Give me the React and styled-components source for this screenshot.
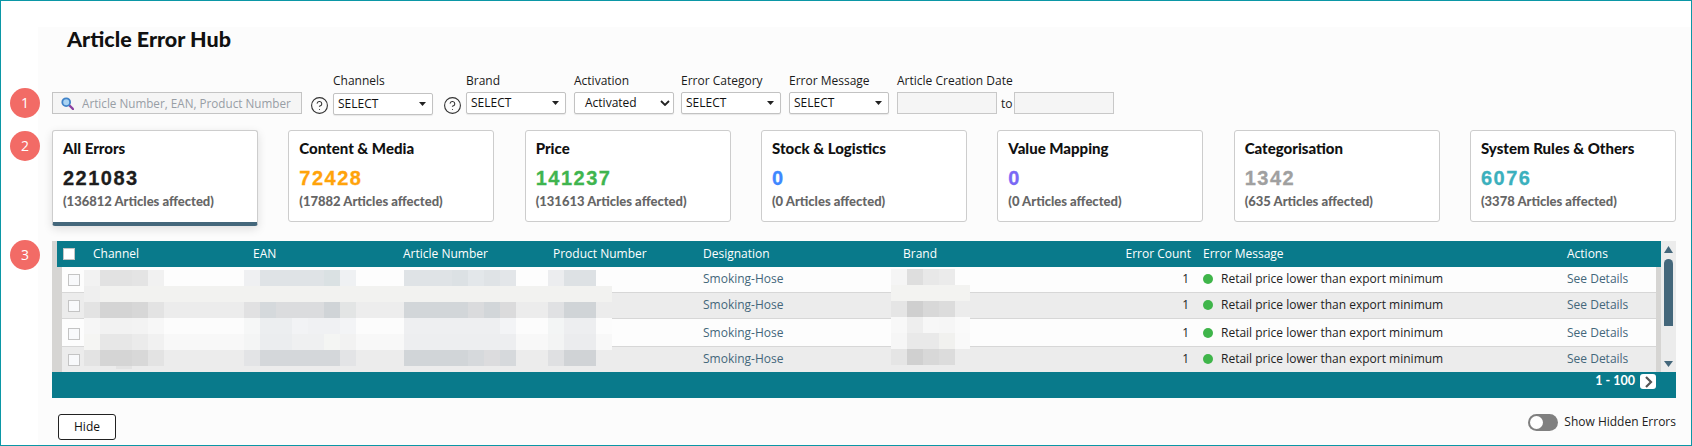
import React from "react";
import styled, { createGlobalStyle } from "styled-components";
import { CircleHelp } from "lucide-react";

const CARDS = [
  { title: "All Errors", count: "221083", affected: "136812", color: "#1d1d1d", active: true },
  { title: "Content & Media", count: "72428", affected: "17882", color: "#ffa30a" },
  { title: "Price", count: "141237", affected: "131613", color: "#3fb54f" },
  { title: "Stock & Logistics", count: "0", affected: "0", color: "#3f88ff" },
  { title: "Value Mapping", count: "0", affected: "0", color: "#7a68f5" },
  { title: "Categorisation", count: "1342", affected: "635", color: "#a0a0a0" },
  { title: "System Rules & Others", count: "6076", affected: "3378", color: "#3bb0bd" },
];

const ROWS = [
  { height: 25 },
  { height: 25, shaded: true },
  { height: 27, shaded: false, lower: true },
  { height: 25, shaded: true, last: true },
];

const COLUMNS = ["Channel", "EAN", "Article Number", "Product Number", "Designation", "Brand"];

// redacted cells: [first cell, cell count, colour] per line of the mosaic
const MOSAIC = [
  [[0, 1, "#f2f2f2"], [1, 2, "#e2e2e2"], [3, 1, "#e4e4e4"], [4, 1, "#f1f1f1"], [10, 1, "#eff0f2"], [11, 4, "#dfe3e6"], [15, 1, "#dae1e3"], [16, 1, "#eff1f3"], [20, 3, "#dfe3e6"], [23, 1, "#dce1e4"], [24, 1, "#e3e7ea"], [25, 1, "#dfe3e6"], [26, 1, "#e3e6e9"], [29, 1, "#ecedef"], [30, 2, "#dde1e4"]],
  [[0, 1, "#efefef"], [1, 32, "#f2f2f0"]],
  [[0, 1, "#e3e3e3"], [1, 2, "#d4d4d4"], [3, 1, "#d7d7d7"], [4, 1, "#e3e3e3"], [5, 5, "#ececec"], [10, 1, "#e1e1e2"], [11, 1, "#d5d9dc"], [12, 3, "#dbdcde"], [15, 1, "#d0d4d7"], [16, 1, "#e3e5e5"], [17, 3, "#ededed"], [20, 4, "#d2d6d9"], [24, 1, "#dadbdd"], [25, 1, "#d2d6d9"], [26, 1, "#dbdbdc"], [27, 2, "#ececec"], [29, 1, "#e0e1e3"], [30, 2, "#d0d4d7"], [32, 1, "#ececec"]],
  [[0, 1, "#f6f6f6"], [1, 2, "#f2f2f2"], [3, 1, "#f3f3f3"], [4, 1, "#f7f7f7"], [5, 5, "#fcfcfc"], [10, 1, "#f6f7f7"], [11, 2, "#eceef0"], [13, 1, "#f2f3f5"], [14, 2, "#f0f1f3"], [16, 1, "#f3f4f6"], [17, 3, "#fcfcfc"], [20, 6, "#eeeff1"], [26, 1, "#f3f4f6"], [27, 2, "#fcfcfc"], [29, 1, "#f3f5f5"], [30, 2, "#edeef0"], [32, 1, "#fcfcfc"]],
  [[0, 1, "#f5f5f3"], [1, 2, "#e7e7e7"], [3, 1, "#ebebeb"], [4, 1, "#f1f1f1"], [5, 5, "#f8f8f8"], [10, 1, "#f4f5f5"], [11, 2, "#ebedef"], [13, 2, "#eff0f1"], [15, 1, "#f4f5f3"], [16, 1, "#f2f2f2"], [17, 3, "#f8f8f8"], [20, 7, "#edeef0"], [27, 2, "#f8f8f8"], [29, 1, "#f3f4f4"], [30, 2, "#ebecee"], [32, 1, "#f8f8f8"]],
  [[0, 1, "#e3e3e3"], [1, 2, "#d5d5d5"], [3, 1, "#d8d8d8"], [4, 1, "#e3e3e3"], [10, 1, "#e3e4e6"], [11, 5, "#d4d7da"], [16, 1, "#e3e4e6"], [20, 4, "#d1d5d8"], [24, 1, "#d6d9dc"], [25, 1, "#dcdcde"], [26, 1, "#d6d9dc"], [29, 1, "#dfe0e2"], [30, 2, "#d0d3d6"]],
];

const BRAND_MOSAIC = [
  ["#f5f5f5", "#dedede", "#e8e8e8", "#ebebeb"],
  ["#f3f3f1", "#f3f3f1", "#f3f3f1", "#f3f3f1", "#f3f3f1"],
  ["#e5e5e5", "#cfcfcf", "#d8d8d8", "#dcdcdc", "#ececec"],
  ["#f8f8f8", "#eeeeee", "#f7f7f7", "#f6f6f6", "#fafafa"],
  ["#f6f6f6", "#e9e9e9", "#e9e9e9", "#f1f1ef", "#f9f9f9"],
  ["#e5e5e5", "#d0d0d0", "#d8d8d8", "#dcdcdc"],
];

const Mosaic = () => (
  <MosaicLayer width="1609" height="131" shapeRendering="crispEdges">
    {MOSAIC.map((line, row) =>
      line.map(([first, count, color]) => (
        <rect key={`${row}-${first}`} x={32 + first * 16} y={29 + row * 16} width={count * 16} height="16" fill={color} />
      ))
    )}
    <rect x="64" y="125" width="16" height="3" fill="#e3e3e3" />
    {BRAND_MOSAIC.map((line, row) =>
      line.map((color, i) => (
        <rect key={`b${row}-${i}`} x={839 + i * 16} y={28 + row * 16} width={i === 4 ? 15 : 16} height="16" fill={color} />
      ))
    )}
  </MosaicLayer>
);

const SearchIcon = () => (
  <svg width="13" height="13" viewBox="0 0 13 13">
    <line x1="8" y1="8" x2="12" y2="12" stroke="#8a3fa0" strokeWidth="2.4" strokeLinecap="round" />
    <circle cx="5.2" cy="5.2" r="3.9" fill="#a9d3f2" stroke="#3f82c8" strokeWidth="1.8" />
  </svg>
);

const Caret = () => (
  <svg width="7" height="4" viewBox="0 0 7 4">
    <path d="M0 0h7L3.5 4z" fill="#222" />
  </svg>
);

const Chevron = () => (
  <svg width="10" height="6" viewBox="0 0 10 6">
    <path d="M1 1l4 4 4-4" fill="none" stroke="#222" strokeWidth="1.8" />
  </svg>
);

const Dropdown = ({ label, lower, gap }) => (
  <Field $gap={gap}>
    <FieldLabel>{label}</FieldLabel>
    <SelectBox $lower={lower}>
      <span>SELECT</span>
      <Caret />
    </SelectBox>
  </Field>
);

const App = () => {
  return (
    <Frame>
      <GlobalStyle />
      <Panel>
        <Title>Article Error Hub</Title>

        <Filters>
          <Badge $top={15}>1</Badge>
          <SearchBox>
            <SearchIcon />
            <SearchInput placeholder="Article Number, EAN, Product Number" />
          </SearchBox>
          <Help>
            <CircleHelp size={19} strokeWidth={1.4} color="#333" />
          </Help>
          <Dropdown label="Channels" lower />
          <Help $wide>
            <CircleHelp size={19} strokeWidth={1.4} color="#333" />
          </Help>
          <Dropdown label="Brand" />
          <Field $gap={8}>
            <FieldLabel>Activation</FieldLabel>
            <SelectBox $native>
              <span>Activated</span>
              <Chevron />
            </SelectBox>
          </Field>
          <Dropdown label="Error Category" gap={7} />
          <Dropdown label="Error Message" gap={8} />
          <Field $gap={8}>
            <FieldLabel>Article Creation Date</FieldLabel>
            <DateRange>
              <DateBox />
              <DateTo>to</DateTo>
              <DateBox />
            </DateRange>
          </Field>
        </Filters>

        <CardRow>
          <Badge $top={1}>2</Badge>
          {CARDS.map((card) => (
            <Card key={card.title} $active={card.active}>
              <CardTitle>{card.title}</CardTitle>
              <CardCount $color={card.color}>{card.count}</CardCount>
              <CardNote>({card.affected} Articles affected)</CardNote>
            </Card>
          ))}
        </CardRow>

        <Table>
          <Badge $top={-1}>3</Badge>
          <TableTop>
            <TableMain>
              <HeaderRow>
                <CheckCell>
                  <Check $header />
                </CheckCell>
                {COLUMNS.map((column) => (
                  <span key={column}>{column}</span>
                ))}
                <CountCell>Error Count</CountCell>
                <span>Error Message</span>
                <span>Actions</span>
              </HeaderRow>
              {ROWS.map((row, i) => (
                <BodyRow key={i} $height={row.height} $shaded={row.shaded} $lower={row.lower} $last={row.last}>
                  <CheckCell>
                    <Check />
                  </CheckCell>
                  <span />
                  <span />
                  <span />
                  <span />
                  <RowLink>Smoking-Hose</RowLink>
                  <span />
                  <RowCount>1</RowCount>
                  <ErrorText>
                    <Dot />
                    Retail price lower than export minimum
                  </ErrorText>
                  <RowLink>See Details</RowLink>
                </BodyRow>
              ))}
              <Mosaic />
            </TableMain>
            <ScrollBar>
              <svg width="9" height="7" viewBox="0 0 9 7">
                <path d="M4.5 0L9 7H0z" fill="#44677b" />
              </svg>
              <ScrollThumb />
              <svg width="9" height="6" viewBox="0 0 9 6">
                <path d="M0 0h9L4.5 6z" fill="#44677b" />
              </svg>
            </ScrollBar>
          </TableTop>
          <Pager>
            1 - 100
            <PagerButton>
              <svg width="9" height="12" viewBox="0 0 9 12">
                <path d="M2 1l5 5-5 5" fill="none" stroke="#555" strokeWidth="2.2" />
              </svg>
            </PagerButton>
          </Pager>
        </Table>

        <BottomBar>
          <HideButton>Hide</HideButton>
          <ToggleGroup>
            <Toggle />
            <ToggleLabel>Show Hidden Errors</ToggleLabel>
          </ToggleGroup>
        </BottomBar>
      </Panel>
    </Frame>
  );
};

export default App;

const UI_FONT = `"Open Sans", "Liberation Sans", sans-serif`;
const HEAD_FONT = `Lato, "Liberation Sans", sans-serif`;
const TEAL = "#097a8b";
const SLATE = "#44677b";

const GlobalStyle = createGlobalStyle`
  body {
    margin: 0;
    background: #fff;
    font-family: ${UI_FONT};
  }
`;

const Frame = styled.div`
  box-sizing: border-box;
  width: 1692px;
  height: 446px;
  border: 1px solid #0b97a6;
  padding: 8px 0 0 37px;
  overflow: hidden;
`;

const Panel = styled.div`
  height: 100%;
  padding: 0 15px 0 14px;
  background: #fcfcfc;
`;

const Title = styled.h1`
  margin: 18px 0 0 15px;
  font: 900 21.5px/24px ${HEAD_FONT};
  color: #111;
`;

const Badge = styled.div`
  position: absolute;
  left: -42px;
  top: ${(p) => p.$top}px;
  width: 30px;
  height: 30px;
  border-radius: 50%;
  background: #f26b66;
  color: #fff;
  font-size: 14px;
  line-height: 30px;
  text-align: center;
`;

const Filters = styled.div`
  position: relative;
  display: flex;
  align-items: flex-start;
  margin-top: 22px;
`;

const SearchBox = styled.label`
  box-sizing: border-box;
  display: flex;
  align-items: center;
  gap: 8px;
  width: 250px;
  height: 22px;
  margin-top: 19px;
  padding-left: 8px;
  background: #f5f5f5;
  border: 1px solid #c4c4c4;
`;

const SearchInput = styled.input`
  flex: 1;
  min-width: 0;
  padding: 0;
  border: 0;
  outline: 0;
  background: transparent;
  font: 11.7px/20px ${UI_FONT};

  &::placeholder {
    color: #989ea5;
    opacity: 1;
  }
`;

const Help = styled.div`
  display: flex;
  justify-content: center;
  width: 16px;
  margin: 23px 6px 0 ${(p) => (p.$wide ? 11 : 9)}px;

  svg {
    flex: none;
  }
`;

const Field = styled.div`
  display: flex;
  flex-direction: column;
  margin-left: ${(p) => p.$gap || 0}px;
`;

const FieldLabel = styled.label`
  height: 16px;
  margin-bottom: 3px;
  font-size: 12px;
  line-height: 16px;
  color: #1a1a1a;
  white-space: nowrap;
`;

const SelectBox = styled.div`
  box-sizing: border-box;
  display: flex;
  align-items: center;
  justify-content: space-between;
  width: 100px;
  height: 22px;
  margin-top: ${(p) => (p.$lower ? 1 : 0)}px;
  padding: 0 ${(p) => (p.$native ? 3 : 6)}px 0 ${(p) => (p.$native ? 10 : 4)}px;
  background: #fff;
  border: 1px solid #c2c2c2;
  border-radius: 2px;
  box-shadow: 0 1px 1px rgba(0, 0, 0, 0.08);
  font-size: 12px;
  color: #111;

  span {
    padding-bottom: 2px;
  }
`;

const DateRange = styled.div`
  display: flex;
  align-items: center;
  font-size: 12px;
  color: #222;
`;

const DateTo = styled.span`
  width: 17px;
  padding-left: 4px;
  box-sizing: border-box;
`;

const DateBox = styled.div`
  box-sizing: border-box;
  width: 100px;
  height: 22px;
  background: #f5f5f5;
  border: 1px solid #c8c8c8;
`;

const CardRow = styled.div`
  position: relative;
  display: flex;
  justify-content: space-between;
  align-items: flex-start;
  margin-top: 15px;
`;

const Card = styled.div`
  box-sizing: border-box;
  width: 206px;
  height: ${(p) => (p.$active ? 96 : 92)}px;
  padding: 7px 10px 0;
  background: #fff;
  border: 1px solid #cdcdcd;
  border-bottom: ${(p) => (p.$active ? `4px solid ${SLATE}` : "1px solid #cdcdcd")};
  border-radius: 3px;
  box-shadow: ${(p) => (p.$active ? "0 3px 10px rgba(0, 0, 0, 0.12)" : "none")};
`;

const CardTitle = styled.div`
  font: 900 15px/20px ${HEAD_FONT};
  color: #111;
  white-space: nowrap;
`;

const CardCount = styled.div`
  margin-top: 7px;
  font: 700 20px/26px "Liberation Sans", sans-serif;
  letter-spacing: 1.5px;
  -webkit-text-stroke: 0.3px ${(p) => p.$color};
  color: ${(p) => p.$color};
`;

const CardNote = styled.div`
  margin-top: 2px;
  font: 900 13px/16px ${HEAD_FONT};
  color: #666;
  white-space: nowrap;
`;

const Table = styled.div`
  position: relative;
  margin-top: 15px;
`;

const TableTop = styled.div`
  display: flex;
`;

const TableMain = styled.div`
  position: relative;
  flex: 1;
  background: #d6d5d3;
`;

const MosaicLayer = styled.svg`
  position: absolute;
  left: 0;
  top: 0;
  pointer-events: none;
`;

const columns = (first) => `${first}px 160px 150px 150px 150px 200px 150px 150px 364px 1fr`;

const HeaderRow = styled.div`
  display: grid;
  grid-template-columns: ${columns(36)};
  align-items: center;
  height: 26px;
  margin-left: 5px;
  background: ${TEAL};
  color: #fff;
  font-size: 12px;
  white-space: nowrap;

  & > span {
    padding-bottom: 2px;
  }
`;

const BodyRow = styled.div`
  display: grid;
  grid-template-columns: ${columns(31)};
  align-items: center;
  height: ${(p) => p.$height - (p.$lower ? 2 : 0)}px;
  margin: 0 5px 0 10px;
  padding-top: ${(p) => (p.$lower ? 2 : 0)}px;
  background: ${(p) => (p.$shaded ? "#ececec" : "#fdfdfd")};
  border-bottom: ${(p) => (p.$last ? "none" : "1px solid #d7d7d7")};
  font-size: 12px;
  color: #222;
  white-space: nowrap;

  & > span {
    padding-bottom: 2px;
  }
`;

const CheckCell = styled.div`
  display: flex;
  padding-left: 6px;
`;

const Check = styled.div`
  box-sizing: border-box;
  width: 12px;
  height: 12px;
  background: ${(p) => (p.$header ? "#fff" : "#f8f9fb")};
  border: 1px solid #c4c4c4;
`;

const CountCell = styled.span`
  padding-right: 12px;
  text-align: right;
`;

const RowCount = styled.span`
  padding-right: 14px;
  text-align: right;
`;

const RowLink = styled.span`
  color: ${SLATE};
  font-weight: 500;
`;

const ErrorText = styled.span`
  display: flex;
  align-items: center;
  gap: 8px;
`;

const Dot = styled.span`
  flex: none;
  width: 10px;
  height: 10px;
  border-radius: 50%;
  background: #3fb54a;
`;

const ScrollBar = styled.div`
  box-sizing: border-box;
  display: flex;
  flex-direction: column;
  align-items: center;
  width: 15px;
  padding-top: 5px;
  background: #ececec;
`;

const ScrollThumb = styled.div`
  width: 9px;
  height: 67px;
  margin: 6px 0 35px;
  background: ${SLATE};
  border-radius: 5px 5px 0 0;
`;

const Pager = styled.div`
  display: flex;
  justify-content: flex-end;
  align-items: flex-start;
  gap: 5px;
  box-sizing: border-box;
  height: 26px;
  padding: 2px 20px 0 0;
  background: ${TEAL};
  color: #fff;
  font: 700 12.5px/13px ${HEAD_FONT};
`;

const PagerButton = styled.div`
  display: flex;
  align-items: center;
  justify-content: center;
  width: 16px;
  height: 15px;
  background: #fff;
  border-radius: 3px;
`;

const BottomBar = styled.div`
  display: flex;
  justify-content: space-between;
  align-items: flex-start;
  margin-top: 16px;
  padding-left: 6px;
`;

const HideButton = styled.button`
  box-sizing: border-box;
  width: 58px;
  height: 26px;
  padding: 0 0 2px;
  background: #fff;
  border: 1px solid #222;
  border-radius: 3px;
  font: 12px ${UI_FONT};
  color: #111;
`;

const ToggleGroup = styled.div`
  display: flex;
  align-items: center;
  gap: 6px;
  height: 17px;
  font-size: 12px;
  color: #222;
  white-space: nowrap;
`;

const ToggleLabel = styled.span`
  padding-bottom: 2px;
`;

const Toggle = styled.div`
  box-sizing: border-box;
  width: 30px;
  height: 17px;
  padding: 2px;
  border-radius: 9px;
  background: #808080;

  &::before {
    content: "";
    display: block;
    width: 13px;
    height: 13px;
    border-radius: 50%;
    background: #fff;
  }
`;
